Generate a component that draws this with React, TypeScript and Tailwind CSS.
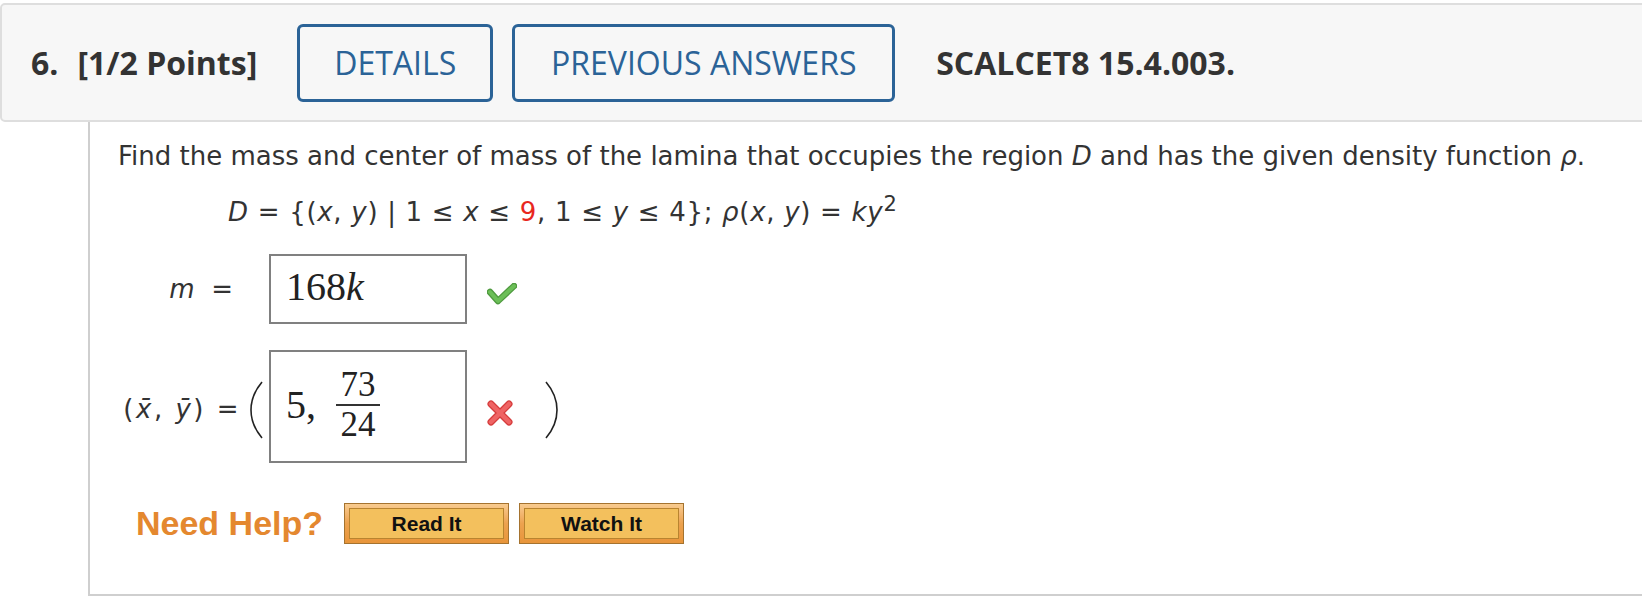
import React from "react";

const head = { fontFamily: '"Open Sans", "Noto Sans", sans-serif' };
const body = { fontFamily: '"DejaVu Sans", Verdana, sans-serif' };
const serif = { fontFamily: '"Liberation Serif", "Times New Roman", serif' };
const arial = { fontFamily: '"Liberation Sans", Arial, sans-serif' };

function Check() {
  return (
    <svg width="30" height="22" viewBox="0 0 30 22">
      <path d="M3 9 L11 18 L27 3" fill="none" stroke="#4f9a3f" strokeWidth="6.5" strokeLinecap="round" strokeLinejoin="round" />
      <path d="M3 9 L11 18 L27 3" fill="none" stroke="#6cbf58" strokeWidth="4" strokeLinecap="round" strokeLinejoin="round" />
    </svg>
  );
}

function Cross() {
  return (
    <svg width="26" height="26" viewBox="0 0 26 26">
      <path d="M4 4 L22 22 M22 4 L4 22" fill="none" stroke="#d63c3c" strokeWidth="7" strokeLinecap="round" />
      <path d="M4 4 L22 22 M22 4 L4 22" fill="none" stroke="#ef6464" strokeWidth="4.5" strokeLinecap="round" />
    </svg>
  );
}

function Paren({ right }: { right?: boolean }) {
  return (
    <svg width="13" height="58" viewBox="0 0 13 58">
      {right ? (
        <path d="M1 1 Q12 14 12 29 Q12 44 1 57" fill="none" stroke="#222" strokeWidth="1.6" />
      ) : (
        <path d="M12 1 Q1 14 1 29 Q1 44 12 57" fill="none" stroke="#222" strokeWidth="1.6" />
      )}
    </svg>
  );
}

function HelpButton({ label }: { label: string }) {
  return (
    <div className="w-[165px] h-[41px] border border-[#a5732f] bg-gradient-to-b from-[#f8cb8f] via-[#eca24f] to-[#e8953a] p-[4px]">
      <div
        className="h-full border border-[#b9842f] bg-[#f3c05d] flex items-center justify-center font-bold text-[21px] text-[#111]"
        style={arial}
      >
        {label}
      </div>
    </div>
  );
}

export default function App() {
  return (
    <div className="w-[1642px] h-[598px] bg-white overflow-hidden pt-[3px]" style={head}>
      <div className="w-[1700px] h-[119px] bg-[#f7f7f7] border-2 border-[#dedede] rounded-[5px] flex items-center pl-[29px] text-[#333]">
        <span className="font-bold text-[32px]">6.</span>
        <span className="font-bold text-[32px] ml-[19px]">[1/2 Points]</span>
        <div className="ml-[40px] w-[196px] h-[78px] border-[3px] border-[#2b6397] rounded-[6px] flex items-center justify-center text-[32px] font-medium text-[#2b6397]">
          DETAILS
        </div>
        <div className="ml-[19px] w-[383px] h-[78px] border-[3px] border-[#2b6397] rounded-[6px] flex items-center justify-center text-[32px] font-medium text-[#2b6397]">
          PREVIOUS ANSWERS
        </div>
        <span className="ml-[41px] font-bold text-[32px]">SCALCET8 15.4.003.</span>
      </div>

      <div className="ml-[88px] w-[1600px] h-[474px] border-l-2 border-b-2 border-[#cfcfcf] text-[#333]" style={body}>
        <div className="pl-[28px] pt-[16px] text-[26px] leading-[36px]">
          Find the mass and center of mass of the lamina that occupies the region <i>D</i> and has the given density function <i>ρ</i>.
        </div>
        <div className="pl-[138px] mt-[20px] text-[26px] leading-[36px] tracking-[0.7px]">
          <i>D</i> = {"{"}(<i>x</i>, <i>y</i>) | 1 ≤ <i>x</i> ≤ <span className="text-[#e8271e]">9</span>, 1 ≤ <i>y</i> ≤ 4{"}"}; <i>ρ</i>(<i>x</i>, <i>y</i>) = <i>ky</i>
          <sup className="text-[21px]">2</sup>
        </div>

        <div className="flex items-center mt-[24px] h-[70px]">
          <div className="w-[143px] text-right text-[26px]">
            <i>m</i>&nbsp; =
          </div>
          <div className="ml-[36px] w-[198px] h-[70px] border-2 border-[#808080] flex items-center pl-[15px] pb-[4px] text-[40px] text-[#222]" style={serif}>
            168<i>k</i>
          </div>
          <div className="ml-[20px] mt-[10px]">
            <Check />
          </div>
        </div>

        <div className="flex items-center mt-[26px] h-[113px]">
          <div className="w-[151px] text-right text-[26px] pt-[6px] tracking-[2.5px]">
            (<i>x̄</i>, <i>ȳ</i>) =
          </div>
          <div className="w-[28px] flex justify-end pr-[6px] pt-[6px]">
            <Paren />
          </div>
          <div className="w-[198px] h-[113px] border-2 border-[#808080] flex items-center pl-[15px] pb-[4px] text-[#222]" style={serif}>
            <span className="text-[40px]">5,</span>
            <span className="ml-[20px] inline-flex flex-col items-center text-[35px] leading-[38px]">
              <span className="px-[4px]">73</span>
              <span className="w-[44px] h-[2px] bg-[#333]"></span>
              <span className="px-[4px]">24</span>
            </span>
          </div>
          <div className="ml-[20px] mt-[12px]">
            <Cross />
          </div>
          <div className="ml-[32px] pt-[6px]">
            <Paren right />
          </div>
        </div>

        <div className="flex items-center mt-[35px] pl-[46px]">
          <span className="font-bold text-[34px] text-[#e4882f]" style={arial}>
            Need Help?
          </span>
          <div className="ml-[21px]">
            <HelpButton label="Read It" />
          </div>
          <div className="ml-[10px]">
            <HelpButton label="Watch It" />
          </div>
        </div>
      </div>
    </div>
  );
}
